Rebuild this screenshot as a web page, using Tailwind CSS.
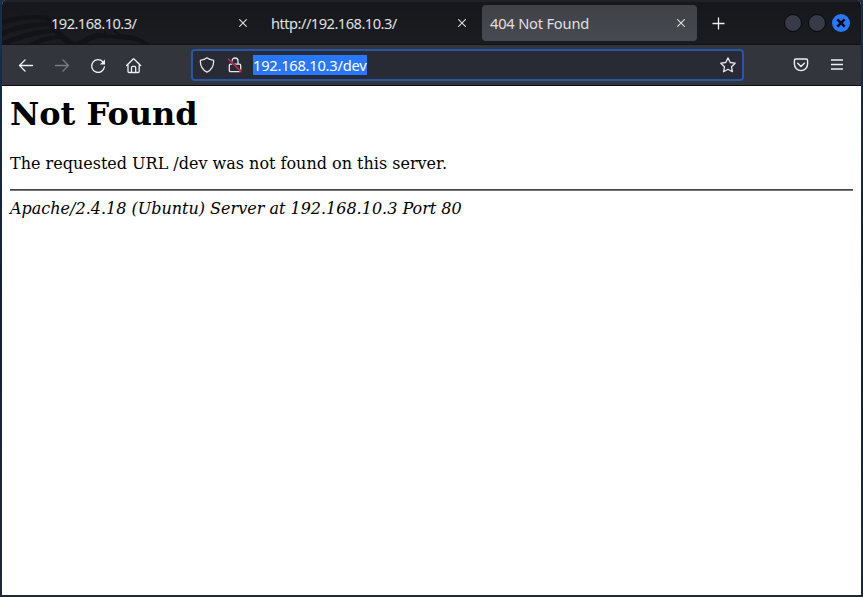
<!DOCTYPE html>
<html lang="en">
<head>
<meta charset="utf-8">
<title>404 Not Found</title>
<script src="https://cdn.jsdelivr.net/npm/@tailwindcss/browser@4"></script>
</head>
<body class="h-[597px] w-[863px] overflow-hidden bg-gradient-to-b from-[#16304a] via-[#172033] to-[#1e2838] pl-[2px] pr-[2px] pb-[2px] font-['Noto_Sans',sans-serif]">
<div class="flex h-[595px] flex-col overflow-hidden rounded-t-[5px] bg-white">
  <header class="relative flex h-[45px] shrink-0 border-b border-[#111216] bg-gradient-to-b from-[#16171b] to-[#1b1c20] pt-[5px] text-[14.67px] text-[#e0e0e2]">
    <div class="absolute inset-x-0 top-0 h-[2px] bg-[#202126]"></div>
    <svg class="absolute left-0 top-0" width="160" height="44" viewBox="0 0 160 44" fill="#121317">
      <path d="M0 20C14 15 30 14 47 16C54 28 62 36 72 42C80 42 84 34 98 33C104 33 108 36 116 35C130 33 138 38 148 44H140C132 39 124 40 114 39C100 36 92 38 84 44H64C56 38 49 29 44 20C28 18 14 20 0 25z"/>
      <path d="M0 31C16 24 32 21 49 23L52 26C34 26 16 29 0 36zM0 41C18 34 36 28 54 29L58 32C40 33 22 38 6 44H0zM26 44C37 38 48 35 60 35L65 39C55 38 45 40 37 44z"/>
      <path d="M94 31q2 6 10 6q-3-4-2-7q5 7 13 6q-5-5-3-7q6 7 14 6l-8 3h-18z"/>
    </svg>
    <div class="relative flex h-9 w-[262px] items-center pl-[49px] pr-[17px]">
      <span class="flex-1 leading-[22px] tracking-[-0.56px]">192.168.10.3/</span>
      <svg width="8" height="8" viewBox="0 0 8 8" stroke="#dedee0" stroke-width="1.1"><path d="M.3.3l7.4 7.4M7.7.3L.3 7.7"/></svg>
    </div>
    <div class="relative flex h-9 w-[218px] items-center pl-[7px] pr-[16px]">
      <span class="flex-1 leading-[22px] tracking-[-0.52px]">http://192.168.10.3/</span>
      <svg width="8" height="8" viewBox="0 0 8 8" stroke="#dedee0" stroke-width="1.1"><path d="M.3.3l7.4 7.4M7.7.3L.3 7.7"/></svg>
    </div>
    <div class="flex h-9 w-[215px] items-center rounded-[4px] bg-gradient-to-b from-[#404146] to-[#464a50] pl-2 pr-3">
      <span class="flex-1 leading-[22px] tracking-[-0.2px]">404 Not Found</span>
      <svg width="8" height="8" viewBox="0 0 8 8" stroke="#dedee0" stroke-width="1.1"><path d="M.3.3l7.4 7.4M7.7.3L.3 7.7"/></svg>
    </div>
    <svg class="ml-[15px] mt-3 shrink-0" width="13" height="13" viewBox="0 0 13 13" stroke="#ededef" stroke-width="1.3"><path d="M6.5.5v12M.5 6.5h12"/></svg>
    <div class="ml-[59px] mt-[9px] flex gap-[6px]">
      <span class="size-[18px] rounded-full border border-[#08090b] bg-[#363b47]"></span>
      <span class="size-[18px] rounded-full border border-[#08090b] bg-[#363b47]"></span>
      <svg width="18" height="18" viewBox="0 0 18 18"><circle cx="9" cy="9" r="9" fill="#2777ff"/><path d="M5.3 5.3l7.4 7.4M12.7 5.3l-7.4 7.4" stroke="#060b15" stroke-width="2.5"/></svg>
    </div>
  </header>
  <nav class="flex h-[41px] shrink-0 items-center border-b border-[#0d0e12] bg-[#33353d] text-[#f0f0f2]">
    <div class="ml-4 mt-px flex gap-5">
      <svg width="16" height="16" viewBox="0 0 16 16" fill="none" stroke="currentColor" stroke-width="1.3" stroke-linecap="round" stroke-linejoin="round"><path d="M14.5 7.5H1.5M7 2L1.5 7.5L7 13"/></svg>
      <svg class="text-[#7b7c81]" width="16" height="16" viewBox="0 0 16 16" fill="none" stroke="currentColor" stroke-width="1.3" stroke-linecap="round" stroke-linejoin="round"><path d="M1.5 7.5h13M9 2L14.5 7.5L9 13"/></svg>
      <svg width="16" height="16" viewBox="0 0 16 16" fill="none" stroke="currentColor" stroke-width="1.3" stroke-linecap="round"><path d="M14.4 9A6.4 6.4 0 1 1 12.8 3.7"/><path d="M15 1.4v5.2H9.8z" fill="currentColor" stroke="none"/></svg>
      <svg width="16" height="16" viewBox="0 0 16 16" fill="none" stroke="currentColor" stroke-width="1.3" stroke-linecap="round" stroke-linejoin="round"><path d="M.6 7.5L7.2 1h.8l6.6 6.5M2 6.7v6.7q0 1.1 1.1 1.1h9q1.1 0 1.1-1.1V6.7"/><path d="M5.5 14.3V9.6q0-1.2 1.2-1.2h1.8q1.2 0 1.2 1.2v4.7"/></svg>
    </div>
    <div class="ml-[49px] flex h-8 w-[553px] items-center rounded-[4px] border-2 border-[#2656a8] bg-[#282a34] pl-[6px] pr-[6px]">
      <svg width="16" height="16" viewBox="0 0 16 16" fill="none" stroke="#e7e7ea" stroke-width="1.3" stroke-linejoin="round"><path d="M8 .8C6.5 2 4 3 2 3.2q-.7.1-.7.9C1.4 9 3.4 13.1 8 15.2C12.6 13.1 14.6 9 14.7 4.1q0-.8-.7-.9C12 3 9.5 2 8 .8z"/></svg>
      <svg class="ml-3" width="16" height="16" viewBox="0 0 16 16" fill="none" stroke="#e7e7ea" stroke-width="1.3"><path d="M5 7V4a3 3 0 0 1 6 0v3M3.6 7.2h8.8q1.3 0 1.3 1.3v4.8q0 1.3-1.3 1.3H3.6q-1.3 0-1.3-1.3V8.5q0-1.3 1.3-1.3z"/><path d="M.8 1.7L14.6 15" stroke="#282a34" stroke-width="2.4"/><path d="M1 1.7L14.6 15.2" stroke="#e22850" stroke-width="1.2"/></svg>
      <span class="ml-[10px] h-5 w-[114px] whitespace-nowrap bg-[#2777ff] text-[14.67px] leading-[21px] tracking-[-0.23px] text-white">192.168.10.3/dev</span>
      <svg class="ml-auto" width="16" height="16" viewBox="0 0 16 16" fill="none" stroke="#e7e7ea" stroke-width="1.3" stroke-linejoin="round"><path d="M8 .9l2.2 4.6 5 .7-3.7 3.5.9 5L8 12.3l-4.4 2.4.9-5L.8 6.2l5-.7z"/></svg>
    </div>
    <svg class="ml-[49px]" width="16" height="16" viewBox="0 0 16 16" fill="none" stroke="currentColor" stroke-width="1.4" stroke-linecap="round" stroke-linejoin="round"><path d="M2.8 2h10.4q1.4 0 1.4 1.4V7a6.6 6.6 0 0 1-13.2 0V3.4Q1.4 2 2.8 2zM4.7 6.2L8 9.4l3.3-3.2"/></svg>
    <svg class="ml-5" width="16" height="16" viewBox="0 0 16 16" stroke="currentColor" stroke-width="1.3"><path d="M2 3h12M2 7.5h12M2 12h12"/></svg>
  </nav>
  <main class="px-2 pt-[9px] font-['DejaVu_Serif',serif] text-black">
    <h1 class="text-[32px] font-bold leading-[38px]">Not Found</h1>
    <p class="mt-[21px] text-[16px] leading-[19px]">The requested URL /dev was not found on this server.</p>
    <hr class="mt-4 h-[2px] border-x-0 border-b border-t border-b-[#77777a] border-t-[#48484b]">
    <address class="mt-[8px] text-[16px] italic leading-[19px]">Apache/2.4.18 (Ubuntu) Server at 192.168.10.3 Port 80</address>
  </main>
</div>
</body>
</html>
